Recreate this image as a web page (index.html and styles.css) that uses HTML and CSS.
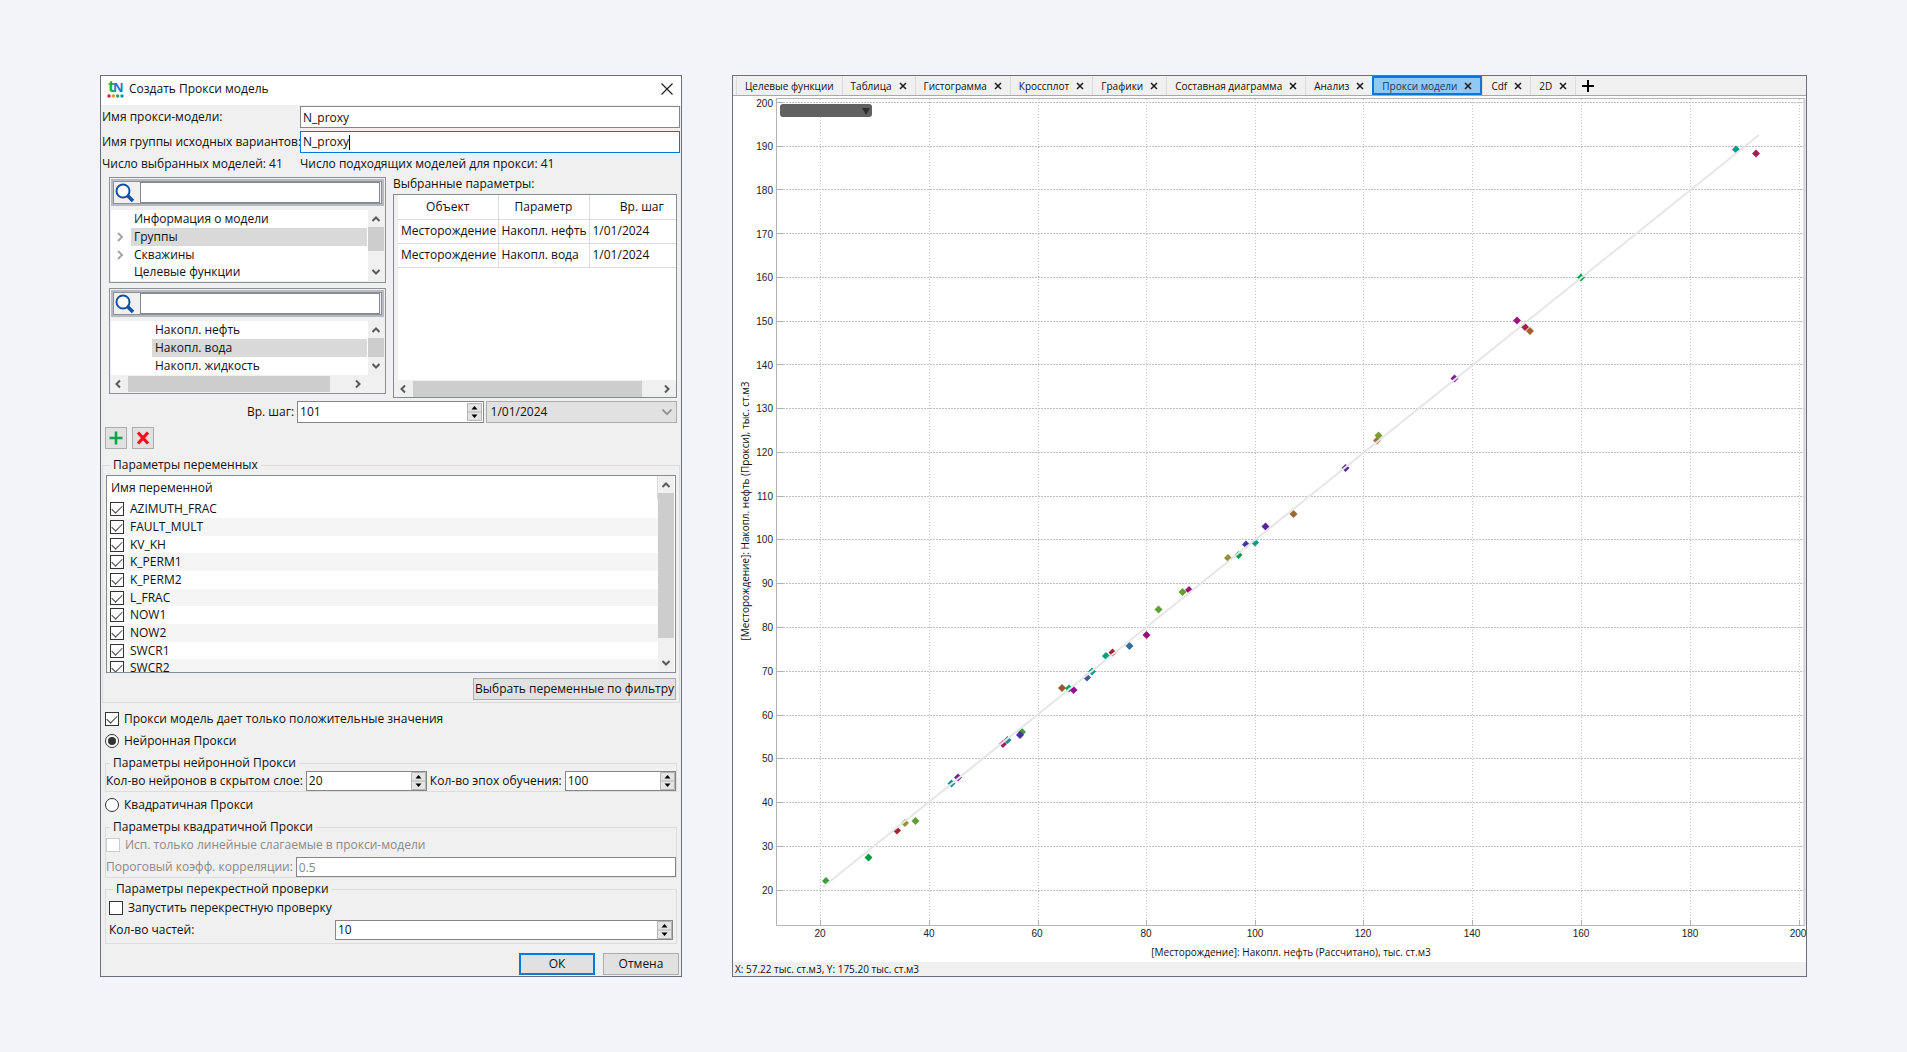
FILE: index.html
```html
<!DOCTYPE html>
<html lang="ru">
<head>
<meta charset="utf-8">
<title>Создать Прокси модель</title>
<link rel="stylesheet" href="styles.css">
</head>
<body>
<svg class="defs" aria-hidden="true">
  <symbol id="up" viewBox="0 0 10 10"><path d="M1.500 7L5 3.500L8.500 7" fill="none" stroke="#5a5a5a" stroke-width="2"/></symbol>
  <symbol id="down" viewBox="0 0 10 10"><path d="M1.500 3L5 6.500L8.500 3" fill="none" stroke="#5a5a5a" stroke-width="2"/></symbol>
  <symbol id="left" viewBox="0 0 10 10"><path d="M7 1.500L3.500 5L7 8.500" fill="none" stroke="#5a5a5a" stroke-width="2"/></symbol>
  <symbol id="right" viewBox="0 0 10 10"><path d="M3 1.500L6.500 5L3 8.500" fill="none" stroke="#5a5a5a" stroke-width="2"/></symbol>
  <symbol id="branch" viewBox="0 0 10 10"><path d="M3 1L7 5L3 9" fill="none" stroke="#a6a6a6" stroke-width="2"/></symbol>
  <symbol id="lens" viewBox="0 0 20 20"><circle cx="8" cy="8" r="6.500" fill="#fff" stroke="#1450a5" stroke-width="2"/><path d="M12.500 12.500L18 18" stroke="#1450a5" stroke-width="3.500"/></symbol>
  <symbol id="close" viewBox="0 0 8 8"><path d="M1 1L7 7M7 1L1 7" stroke="#1a1a1a" stroke-width="1.500"/></symbol>
  <symbol id="spin" viewBox="0 0 15 18"><path d="M0.500 0.500H14.500V17.500H0.500ZM0.500 9H14.500" fill="#e4e4e4" stroke="#b4b4b4"/><path d="M4.500 6.500L7.500 3L10.500 6.500ZM4.500 11.500L7.500 15L10.500 11.500Z" fill="#000"/></symbol>
</svg>
<main class="desk">
<form class="window dialog">
  <header class="titlebar">
    <svg class="logo" viewBox="0 0 17 18" aria-hidden="true">
      <text x="1" y="12" class="logo-t">t</text><text x="6" y="12" class="logo-n">N</text>
      <circle cx="2" cy="16" r="1.700" fill="#e5162a"/><circle cx="6.300" cy="16" r="1.700" fill="#f5921e"/><circle cx="10.600" cy="16" r="1.700" fill="#14b04a"/><circle cx="15" cy="16" r="1.700" fill="#1a86cc"/>
    </svg>
    <h1>Создать Прокси модель</h1>
    <button type="button" class="close" aria-label="Закрыть"><svg viewBox="0 0 12 12"><path d="M0.500 0.500L11.500 11.500M11.500 0.500L0.500 11.500" stroke="#222" stroke-width="1.200"/></svg></button>
  </header>
  <div class="body">
    <div class="names">
      <label for="pname">Имя прокси-модели:</label><input id="pname" class="field" value="N_proxy">
      <label for="gname">Имя группы исходных вариантов:</label><span class="field active"><input id="gname" value="N_proxy" size="6"><i class="caret"></i></span>
      <span class="count">Число выбранных моделей: 41</span><span class="count">Число подходящих моделей для прокси: 41</span>
    </div>
    <div class="pick">
      <div class="trees">
        <section class="tree">
          <label class="search"><svg class="lens"><use href="#lens"/></svg><input aria-label="Поиск объекта"></label>
          <div class="scroller">
            <ul class="rows">
              <li>Информация о модели</li>
              <li class="selected"><svg class="branch"><use href="#branch"/></svg>Группы</li>
              <li><svg class="branch"><use href="#branch"/></svg>Скважины</li>
              <li>Целевые функции</li>
            </ul>
            <div class="vbar"><svg><use href="#up"/></svg><i class="thumb objects"></i><svg><use href="#down"/></svg></div>
          </div>
        </section>
        <section class="tree">
          <label class="search"><svg class="lens"><use href="#lens"/></svg><input aria-label="Поиск параметра"></label>
          <div class="scroller short">
            <ul class="rows deep">
              <li>Накопл. нефть</li>
              <li class="selected">Накопл. вода</li>
              <li>Накопл. жидкость</li>
            </ul>
            <div class="vbar"><svg><use href="#up"/></svg><i class="thumb params"></i><svg><use href="#down"/></svg></div>
          </div>
          <div class="hbar inset"><svg><use href="#left"/></svg><i class="track"><i class="thumb"></i></i><svg><use href="#right"/></svg></div>
        </section>
      </div>
      <div class="chosen">
        <span class="caption">Выбранные параметры:</span>
        <div class="grid">
          <div class="gridbody">
            <table>
              <thead><tr><th>Объект</th><th>Параметр</th><th>Вр. шаг</th></tr></thead>
              <tbody>
                <tr><td>Месторождение</td><td>Накопл. нефть</td><td>1/01/2024</td></tr>
                <tr><td>Месторождение</td><td>Накопл. вода</td><td>1/01/2024</td></tr>
              </tbody>
            </table>
          </div>
          <div class="hbar"><svg><use href="#left"/></svg><i class="track"><i class="thumb"></i></i><svg><use href="#right"/></svg></div>
        </div>
      </div>
    </div>
    <div class="step">
      <label for="step">Вр. шаг:</label>
      <span class="spin"><input id="step" value="101"><svg><use href="#spin"/></svg></span>
      <span class="combo"><select aria-label="Дата"><option>1/01/2024</option></select><svg viewBox="0 0 10 10"><path d="M0.500 2.500L5 7L9.500 2.500" fill="none" stroke="#8a8a8a" stroke-width="1.600"/></svg></span>
    </div>
    <div class="tools">
      <button type="button" aria-label="Добавить"><svg viewBox="0 0 14 14"><path d="M7 0.500V13.500M0.500 7H13.500" stroke="#0aa548" stroke-width="2.600"/></svg></button>
      <button type="button" aria-label="Удалить"><svg viewBox="0 0 14 14"><path d="M2 1.500L12 12.500M12 1.500L2 12.500" stroke="#fb0d1b" stroke-width="3.200"/></svg></button>
    </div>
    <fieldset class="vars">
      <legend>Параметры переменных</legend>
      <div class="varlist">
        <div class="varcol">
          <div class="head">Имя переменной</div>
          <ul>
            <li><label><input type="checkbox" checked>AZIMUTH_FRAC</label></li>
            <li><label><input type="checkbox" checked>FAULT_MULT</label></li>
            <li><label><input type="checkbox" checked>KV_KH</label></li>
            <li><label><input type="checkbox" checked>K_PERM1</label></li>
            <li><label><input type="checkbox" checked>K_PERM2</label></li>
            <li><label><input type="checkbox" checked>L_FRAC</label></li>
            <li><label><input type="checkbox" checked>NOW1</label></li>
            <li><label><input type="checkbox" checked>NOW2</label></li>
            <li><label><input type="checkbox" checked>SWCR1</label></li>
            <li><label><input type="checkbox" checked>SWCR2</label></li>
          </ul>
        </div>
        <div class="vbar"><svg><use href="#up"/></svg><i class="thumb names-thumb"></i><svg><use href="#down"/></svg></div>
      </div>
      <button type="button" class="btn filter">Выбрать переменные по фильтру</button>
    </fieldset>
    <div class="options">
      <label class="opt"><input type="checkbox" checked>Прокси модель дает только положительные значения</label>
      <label class="opt"><input type="radio" name="kind" checked>Нейронная Прокси</label>
      <fieldset>
        <legend>Параметры нейронной Прокси</legend>
        <div class="line">
          <label for="neurons">Кол-во нейронов в скрытом слое:</label>
          <span class="spin neurons"><input id="neurons" value="20"><svg><use href="#spin"/></svg></span>
          <label for="epochs">Кол-во эпох обучения:</label>
          <span class="spin"><input id="epochs" value="100"><svg><use href="#spin"/></svg></span>
        </div>
      </fieldset>
      <label class="opt"><input type="radio" name="kind">Квадратичная Прокси</label>
      <fieldset class="off" disabled>
        <legend>Параметры квадратичной Прокси</legend>
        <label class="opt"><input type="checkbox">Исп. только линейные слагаемые в прокси-модели</label>
        <div class="line"><label for="corr">Пороговый коэфф. корреляции:</label><input id="corr" class="field" value="0.5"></div>
      </fieldset>
      <fieldset class="cross">
        <legend>Параметры перекрестной проверки</legend>
        <label class="opt"><input type="checkbox">Запустить перекрестную проверку</label>
        <div class="line parts"><label for="parts">Кол-во частей:</label><span class="spin"><input id="parts" value="10"><svg><use href="#spin"/></svg></span></div>
      </fieldset>
    </div>
    <footer><button type="submit" class="btn primary">ОК</button><button type="button" class="btn">Отмена</button></footer>
  </div>
</form>

<section class="window viewer">
  <nav class="tabs">
    <a href="#t1">Целевые функции</a>
    <a href="#t2">Таблица<svg><use href="#close"/></svg></a>
    <a href="#t3">Гистограмма<svg><use href="#close"/></svg></a>
    <a href="#t4">Кроссплот<svg><use href="#close"/></svg></a>
    <a href="#t5">Графики<svg><use href="#close"/></svg></a>
    <a href="#t6">Составная диаграмма<svg><use href="#close"/></svg></a>
    <a href="#t7">Анализ<svg><use href="#close"/></svg></a>
    <a href="#t8" class="current">Прокси модели<svg><use href="#close"/></svg></a>
    <a href="#t9">Cdf<svg><use href="#close"/></svg></a>
    <a href="#t10">2D<svg><use href="#close"/></svg></a>
    <button type="button" aria-label="Новая вкладка"><svg viewBox="0 0 12 12"><path d="M6 0V12M0 6H12" stroke="#000" stroke-width="2"/></svg></button>
  </nav>
  <svg class="chart" viewBox="733 96 1073 866" role="img" aria-label="Кроссплот прокси модели">
    <defs><path id="p" d="M0-4L4 0L0 4L-4 0Z"/></defs>
    <g class="hgrid">
      <path d="M777 102.500H1805M777 146.500H1805M777 189.500H1805M777 233.500H1805M777 277.500H1805M777 321.500H1805M777 364.500H1805M777 408.500H1805M777 452.500H1805M777 496.500H1805M777 539.500H1805M777 583.500H1805M777 627.500H1805M777 671.500H1805M777 715.500H1805M777 758.500H1805M777 802.500H1805M777 846.500H1805M777 890.500H1805"/>
    </g>
    <g class="vgrid">
      <path d="M820.500 99V925M929.500 99V925M1038.500 99V925M1146.500 99V925M1255.500 99V925M1363.500 99V925M1472.500 99V925M1581.500 99V925M1690.500 99V925M1799.500 99V925"/>
    </g>
    <path class="ticks" d="M777 102.500h6M777 146.500h6M777 189.500h6M777 233.500h6M777 277.500h6M777 321.500h6M777 364.500h6M777 408.500h6M777 452.500h6M777 496.500h6M777 539.500h6M777 583.500h6M777 627.500h6M777 671.500h6M777 715.500h6M777 758.500h6M777 802.500h6M777 846.500h6M777 890.500h6M820.500 925v-5M929.500 925v-5M1038.500 925v-5M1146.500 925v-5M1255.500 925v-5M1363.500 925v-5M1472.500 925v-5M1581.500 925v-5M1690.500 925v-5M1799.500 925v-5"/>
    <path class="frame" d="M776.500 98.500H1805M776.500 98V925.500H1805"/>
    <path class="edge" d="M1804.500 98V925"/>
    <g>
      <use href="#p" x="826" y="881" fill="#3a9f3a"/><use href="#p" x="868.500" y="857.500" fill="#009f3c"/><use href="#p" x="897" y="830.500" fill="#a02535"/><use href="#p" x="905" y="823" fill="#9a8f35"/><use href="#p" x="915.500" y="821" fill="#5f9f35"/><use href="#p" x="951.500" y="783.500" fill="#158f95"/><use href="#p" x="958" y="777.500" fill="#7a1f95"/><use href="#p" x="1003" y="744" fill="#a01f65"/><use href="#p" x="1007.500" y="740" fill="#158f95"/><use href="#p" x="1022" y="732" fill="#3a9f3a"/><use href="#p" x="1020" y="735" fill="#4a2f9f"/><use href="#p" x="1062" y="688" fill="#9a5535"/><use href="#p" x="1069" y="688.500" fill="#009f5a"/><use href="#p" x="1073.500" y="690" fill="#950f95"/><use href="#p" x="1087" y="677.500" fill="#3f559f"/><use href="#p" x="1092" y="671.500" fill="#109a85"/><use href="#p" x="1106" y="656" fill="#009f7a"/><use href="#p" x="1112.500" y="652.500" fill="#a02535"/><use href="#p" x="1129.500" y="646" fill="#2f6f9f"/><use href="#p" x="1146.500" y="635" fill="#950f7a"/><use href="#p" x="1158.500" y="609.500" fill="#5f9f35"/><use href="#p" x="1182.500" y="592" fill="#5f9f35"/><use href="#p" x="1189" y="590" fill="#a0107a"/><use href="#p" x="1228" y="558" fill="#958f35"/><use href="#p" x="1238.500" y="555" fill="#009f45"/><use href="#p" x="1246" y="544.500" fill="#4a359f"/><use href="#p" x="1255" y="542.500" fill="#009f85"/><use href="#p" x="1265.500" y="526.500" fill="#5a2598"/><use href="#p" x="1293.500" y="514" fill="#9a6a35"/><use href="#p" x="1345.500" y="468" fill="#5a2598"/><use href="#p" x="1377" y="440.500" fill="#a5703a"/><use href="#p" x="1378.500" y="435.500" fill="#7a9f35"/><use href="#p" x="1454.500" y="378.500" fill="#7a1f95"/><use href="#p" x="1517" y="320.500" fill="#a01085"/><use href="#p" x="1525" y="327" fill="#a51f45"/><use href="#p" x="1530" y="331" fill="#a5602f"/><use href="#p" x="1581" y="277.500" fill="#009f4a"/><use href="#p" x="1736" y="149.500" fill="#009f8a"/><use href="#p" x="1756" y="153.500" fill="#a02050"/>
    </g>
    <path class="fit" d="M823 887L1759 135"/>
    <g class="ylab">
      <text x="773" y="107">200</text><text x="773" y="150">190</text><text x="773" y="194">180</text><text x="773" y="238">170</text><text x="773" y="281">160</text><text x="773" y="325">150</text><text x="773" y="369">140</text><text x="773" y="412">130</text><text x="773" y="456">120</text><text x="773" y="500">110</text><text x="773" y="543">100</text><text x="773" y="587">90</text><text x="773" y="631">80</text><text x="773" y="675">70</text><text x="773" y="719">60</text><text x="773" y="762">50</text><text x="773" y="806">40</text><text x="773" y="850">30</text><text x="773" y="894">20</text>
    </g>
    <g class="xlab">
      <text x="820" y="937">20</text><text x="929" y="937">40</text><text x="1037" y="937">60</text><text x="1146" y="937">80</text><text x="1255" y="937">100</text><text x="1363" y="937">120</text><text x="1472" y="937">140</text><text x="1581" y="937">160</text><text x="1690" y="937">180</text><text x="1798" y="937">200</text>
      <text class="axis" x="1291" y="956">[Месторождение]: Накопл. нефть (Рассчитано), тыс. ст.м3</text>
      <text class="axis" transform="translate(749 511) rotate(-90)">[Месторождение]: Накопл. нефть (Прокси), тыс. ст.м3</text>
    </g>
    <rect x="780" y="104" width="92" height="13" rx="3" fill="#616161"/>
    <path d="M862 108H870L866 115Z" fill="#303030"/>
  </svg>
  <div class="status">X: 57.22 тыс. ст.м3, Y: 175.20 тыс. ст.м3</div>
</section>
</main>
</body>
</html>
```
FILE: styles.css
```css
* { box-sizing: border-box; }
body { margin: 0; background: #f3f4f9; color: #111; font: 12px/16px "Open Sans", "Noto Sans", sans-serif; }
ul { list-style: none; margin: 0; padding: 0; }
input, button, select { font: inherit; color: inherit; margin: 0; padding: 0; border: 0; border-radius: 0; background: none; outline: 0; min-width: 0; }
svg { display: block; flex: none; }
i { display: block; }
a { color: inherit; text-decoration: none; }
.defs { position: absolute; width: 0; height: 0; }

.desk { display: grid; grid-template-columns: minmax(0, 582fr) minmax(0, 1075fr); gap: 50px; padding: 75px 100px; align-items: stretch; }
.window { border: 1px solid #6b6e80; background: #f0f0f0; }

/* dialog */
.titlebar { display: flex; align-items: center; height: 29px; background: #fff; padding: 0 8px 3px 6px; }
.titlebar h1 { flex: 1; margin: 0 0 0 5px; font-size: 12px; font-weight: 400; }
.logo { width: 17px; height: 18px; overflow: visible; }
.logo-t, .logo-n { font: bold 16px "Open Sans", sans-serif; fill: #14b04a; }
.logo-n { font-size: 13px; fill: #1a7ac4; }
.close svg { width: 12px; height: 12px; }
.body { padding: 1px; }
.names { display: grid; grid-template-columns: 198px 1fr; row-gap: 3px; align-items: center; }
.names label, .names .count { white-space: nowrap; }
.field { width: 100%; height: 22px; border: 1px solid #868686; background: #fff; padding: 0 2px; }
.field.active { display: flex; align-items: center; border-color: #0a74d8; }
.active input { width: 46px; }
.caret { width: 1px; height: 15px; background: #000; }

.pick { display: grid; grid-template-columns: 277px minmax(0, 1fr); gap: 7px; margin: 5px 3px 0 7px; }
.trees { display: grid; gap: 5px; align-content: start; }
.tree { border: 1px solid #8b909a; height: 106px; padding: 1px 1px 0; }
.search { display: flex; align-items: center; gap: 5px; height: 27px; padding: 0 2px; border: 2px solid #b7bac0; box-shadow: inset 0 0 0 1px #8b909a; margin-bottom: 4px; }
.lens { width: 20px; height: 20px; }
.search input { flex: 1; height: 21px; border: 1px solid #868686; background: #fff; padding: 0 3px; }
.scroller { display: flex; height: 71px; background: #fff; overflow: hidden; }
.short { height: 54px; }
.rows { flex: 1; padding-left: 20px; }
.rows li { position: relative; height: 18px; line-height: 18px; padding-left: 3px; margin-right: 1px; }
.rows li:nth-child(3n) { height: 17px; }
.rows.deep { padding-left: 41px; }
.selected { background: #d9d9d9; }
.branch { position: absolute; left: -16px; top: 4px; width: 10px; height: 10px; }
.vbar { display: flex; flex-direction: column; align-items: center; width: 16px; background: #f0f0f0; padding: 4px 0; }
.vbar svg, .hbar svg { width: 10px; height: 10px; }
.vbar svg:last-child { margin-top: auto; }
.thumb { background: #cdcdcd; }
.vbar .thumb { width: 16px; margin-top: 3px; }
.objects { height: 24px; }
.params { height: 19px; }
.names-thumb { height: 145px; }
.hbar { display: flex; align-items: center; height: 17px; gap: 5px; padding: 0 4px; background: #f0f0f0; }
.hbar.inset { padding: 0 21px 0 2px; }
.track { flex: 1; height: 16px; }
.track .thumb { width: 94%; height: 100%; }
.inset .track .thumb { width: 92%; }

.chosen { display: flex; flex-direction: column; }
.caption { height: 17px; line-height: 14px; }
.grid { display: flex; flex-direction: column; height: 204px; border: 1px solid #868a96; background: #fff; }
.gridbody { flex: 1; overflow: hidden; border-left: 4px solid #f0f0f0; }
.grid table { width: 100%; border-collapse: collapse; table-layout: fixed; }
.grid th, .grid td { height: 24px; padding: 0 0 0 3px; border: solid #dcdcdc; border-width: 0 1px 1px 0; font-weight: 400; text-align: left; white-space: nowrap; overflow: hidden; }
.grid th { text-align: center; padding: 0; }
.grid th:nth-child(1) { width: 100px; }
.grid th:nth-child(2) { width: 91px; }
.grid th:last-child { padding-left: 18px; border-right: 0; }
.grid td:last-child { border-right: 0; }

.step { display: flex; align-items: center; gap: 2px; margin: 3px 3px 4px 145px; }
.step label { margin-right: 1px; }
.spin { display: flex; align-items: center; flex: 1; min-width: 0; height: 20px; border: 1px solid #868686; background: #fff; padding-left: 2px; }
.spin input { flex: 1; width: 0; }
.spin svg { width: 15px; height: 18px; }
.step .spin { height: 22px; padding-right: 1px; }
.combo { display: flex; align-items: center; flex: 1; height: 22px; border: 1px solid #adadad; background: #e1e1e1; padding: 0 4px; }
.combo select { flex: 1; appearance: none; }
.combo svg { width: 10px; height: 10px; }
.tools { display: flex; gap: 5px; padding-left: 3px; }
.tools button { display: grid; place-items: center; width: 22px; height: 22px; border: 1px solid #adadad; background: #e1e1e1; }
.tools svg { width: 14px; height: 14px; }

fieldset { min-width: 0; margin: 0; padding: 0; border: 1px solid #dcdcdc; }
legend { margin-left: 4px; padding: 0 3px; }
.vars { margin-top: 8px; padding: 2px 3px; }
.varlist { display: flex; height: 198px; border: 1px solid #868a96; background: #fff; overflow: hidden; }
.varcol { flex: 1; min-width: 0; }
.head { height: 24px; padding: 4px; border-right: 1px solid #dcdcdc; }
.varcol li { height: 18px; line-height: 18px; padding-left: 3px; }
.varcol li:nth-child(3n) { height: 17px; }
.varcol li:nth-child(even) { background: #f5f5f5; }
.varcol label, .opt { display: flex; align-items: center; gap: 6px; }
.varcol label { height: 17px; }
.vars .vbar { margin-right: 1px; }
.btn { height: 22px; border: 1px solid #adadad; background: #e1e1e1; text-align: center; }
.filter { display: block; margin: 5px 0 0 auto; padding: 0 1px; white-space: nowrap; }

input[type=checkbox], input[type=radio] { appearance: none; flex: none; display: grid; place-items: center; width: 14px; height: 14px; border: 1px solid #333; background: #fff; }
input[type=checkbox]:checked::after { content: ""; width: 9px; height: 5px; border: solid #444; border-width: 0 0 1px 1px; transform: translateY(-1px) rotate(-45deg); }
input[type=radio] { border-radius: 50%; }
input[type=radio]:checked::after { content: ""; width: 8px; height: 8px; border-radius: 50%; background: #333; }
.options { padding: 8px 3px 0 3px; }
.opt { height: 16px; margin-bottom: 6px; }
.options .opt { gap: 5px; }
.line { display: flex; align-items: center; gap: 3px; }
.line label { white-space: nowrap; }
.line .neurons { flex: 0 0 121px; }
.options fieldset { margin-bottom: 5px; }
.options .off { margin-bottom: 3px; }
.off .opt { margin: 2px 0 4px; }
.off .opt, .off .line { color: #8a8a8a; }
.off input[type=checkbox] { border-color: #ccc; }
.line .field { flex: 1; width: 0; height: 20px; }
.cross { padding: 3px; }
.cross .opt { margin-bottom: 4px; }
.parts label { flex: 0 0 223px; }
footer { display: flex; justify-content: flex-end; gap: 8px; padding: 4px 1px 0; }
footer .btn { width: 76px; }
.primary { border: 2px solid #0a78d7; }

/* viewer */
.viewer { display: flex; flex-direction: column; background: #fff; }
.tabs { display: flex; height: 20px; padding-left: 3px; background: #f0f0f0; border-bottom: 1px solid #a8a8a8; font-size: 10px; }
.tabs a { display: flex; align-items: center; gap: 7px; padding: 0 8px; border-left: 1px solid #dcdcdc; white-space: nowrap; }
.tabs a svg { width: 8px; height: 8px; }
.tabs .current { border: 2px solid #0a78d7; background: #91c9f4; color: #0e3a66; }
.tabs button { padding: 0 6px; border-left: 1px solid #dcdcdc; }
.tabs button svg { width: 12px; height: 12px; }
.chart { width: 100%; flex: 1; min-height: 0; }
.hgrid, .vgrid, .ticks, .frame, .edge, .fit { fill: none; }
.hgrid { stroke: #c0c0c0; stroke-dasharray: 2 1; }
.vgrid { stroke: #c4c4c4; stroke-dasharray: 1 2; }
.ticks { stroke: #b0b0b0; }
.frame { stroke: #b4b4b4; }
.edge { stroke: #d0d0d0; stroke-width: 2; }
.fit { stroke: #e6e6e6; stroke-width: 2; }
.ylab text, .xlab text { font: 10px "Liberation Sans", sans-serif; fill: #222; text-anchor: end; }
.xlab text { text-anchor: middle; }
.xlab .axis { font: 10px "Open Sans", sans-serif; fill: #111; }
.status { height: 14px; background: #f0f0f0; padding-left: 2px; font-size: 10px; line-height: 14px; }
```
